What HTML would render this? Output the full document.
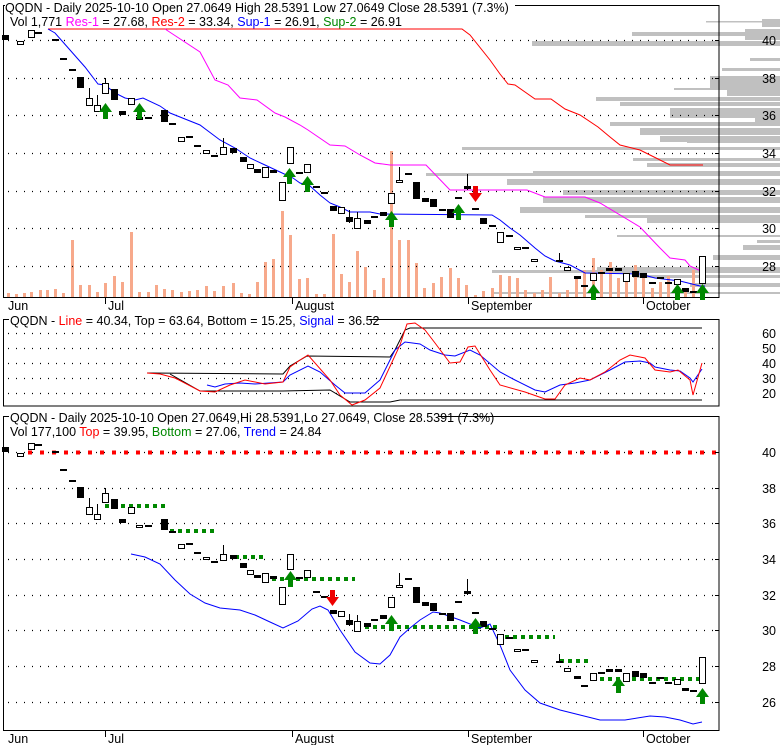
<!DOCTYPE html>
<html><head><meta charset="utf-8"><style>
html,body{margin:0;padding:0;background:#fff;width:780px;height:745px;overflow:hidden}
svg{display:block;font-family:"Liberation Sans",Arial,sans-serif}
</style></head><body>
<svg id="s" width="780" height="745" xmlns="http://www.w3.org/2000/svg">
<g id="vp" fill="#c0c0c0"></g>
<g id="vol" fill="#f7a98b"></g>
<g id="grid" stroke="#000" stroke-width="1.2" stroke-dasharray="1,7"></g>
<rect x="3.5" y="5.5" width="715.5" height="292" fill="none" stroke="#000"/>
<rect x="3.5" y="319.5" width="715.5" height="86.5" fill="none" stroke="#000"/>
<rect x="3.5" y="416.5" width="715.5" height="314" fill="none" stroke="#000"/>
<g id="lines" fill="none" stroke-width="1"></g>
<g id="c"></g>
<g id="t" font-size="12.5" fill="#000"></g>
</svg>
<script>
var NS="http://www.w3.org/2000/svg",S=document.getElementById('s');
function el(p,n,a,txt){var e=document.createElementNS(NS,n);for(var k in a)e.setAttribute(k,a[k]);if(txt!=null)e.textContent=txt;document.getElementById(p).appendChild(e);return e;}
[40,78,115,153,191,228,266].forEach(function(y){el('grid','line',{x1:8,x2:719,y1:y+.5,y2:y+.5});});
[333,348,363,378,393].forEach(function(y){el('grid','line',{x1:8,x2:719,y1:y+.5,y2:y+.5});});
[452,488,523,559,595,630,666,702].forEach(function(y){el('grid','line',{x1:8,x2:719,y1:y+.5,y2:y+.5});});
[[19,762,8],[21,706,1.5],[29,745,11],[32,632,4],[41,532,5],[58,750,3],[68,722,3],[76,710,14],[88,674,2],[90,727,6],[97,596,4],[102,620,4],[108,670,10],[118,755,6],[122,610,4],[128,640,7],[136,660,6],[140,687,3],[147,462,3],[158,633,3],[163,647,4],[171,533,5],[173,426,3],[179,507,6],[190,563,5],[197,543,6],[207,520,6],[215,585,3],[218,647,5],[235,617,2],[240,757,3],[245,743,5],[255,713,5],[267,597,3],[270,492,3],[275,633,3],[283,690,4],[292,492,2]].forEach(function(r){el('vp','rect',{x:r[1],y:r[0],width:780-r[1],height:r[2]});});
var V=[[8,293],[16,294],[24,293],[31,292],[40,290],[47,290],[55,289],[63,293],[72,240],[80,285],[89,285],[97,292],[105,283],[114,276],[122,282],[131,232],[139,292],[148,292],[156,285],[164,289],[172,290],[181,292],[189,291],[197,290],[206,286],[214,291],[223,286],[233,283],[241,293],[249,294],[257,282],[265,262],[273,259],[282,211],[290,235],[299,279],[307,278],[316,294],[324,294],[333,234],[341,274],[349,282],[357,251],[365,267],[374,290],[383,278],[391,151],[399,240],[408,240],[416,263],[424,288],[433,283],[441,277],[450,268],[458,278],[466,285],[475,295],[483,291],[492,288],[500,275],[509,276],[517,278],[525,290],[534,293],[542,290],[550,277],[559,293],[567,290],[576,277],[584,270],[593,258],[601,270],[610,262],[618,278],[626,275],[635,265],[643,278],[652,288],[660,282],[668,276],[677,292],[685,292],[693,270],[702,285]];
V.forEach(function(v){el('vol','rect',{x:v[0]-1,y:v[1],width:3,height:297-v[1]});});
function pl(pts,col,w,dash){el('lines','polyline',{points:pts.map(function(p){return p.join(',')}).join(' '),stroke:col,'stroke-width':w||1,'stroke-dasharray':dash||'none'});}
pl([[48,29],[462,29],[470,35],[490,60],[500,74],[508,84],[515,85],[535,99],[551,99],[565,109],[580,115],[598,127],[610,137],[620,145],[640,150],[650,155],[670,165],[703,165]],'#f00');
pl([[165,29],[200,52],[215,80],[228,85],[240,98],[257,100],[275,113],[285,117],[300,125],[308,130],[330,145],[345,146],[360,155],[375,163],[390,165],[426,165],[450,190],[527,190],[545,197],[585,197],[600,203],[640,227],[660,248],[670,258],[685,260],[690,266],[703,272]],'#f0f');
pl([[48,29],[55,33],[70,50],[85,67],[98,84],[105,85],[115,93],[125,98],[135,100],[143,98],[160,106],[170,113],[200,125],[220,140],[235,148],[250,158],[265,165],[280,172],[293,178],[300,183],[310,186],[320,195],[330,203],[340,207],[350,212],[370,212],[380,214],[492,215],[500,220],[510,228],[520,235],[535,248],[545,256],[555,261],[570,265],[585,273],[640,274],[655,278],[680,281],[700,286],[705,286]],'#00f');
pl([[147,373],[283,374],[290,366],[307,356],[390,357],[395,350],[405,330],[410,328],[702,328]],'#000');
pl([[170,374],[200,391],[283,391],[330,390],[350,402],[390,402],[400,400],[702,400]],'#000');
pl([[207,385],[215,387],[225,384],[240,383],[255,384],[283,382],[290,375],[308,366],[320,372],[335,385],[345,393],[365,393],[380,380],[395,350],[405,342],[420,344],[430,350],[445,355],[455,356],[470,350],[480,355],[500,372],[515,380],[535,390],[545,392],[560,385],[575,383],[590,380],[610,370],[625,362],[640,361],[650,363],[655,367],[670,370],[680,371],[690,378],[693,382],[702,369]],'#00f');
pl([[147,373],[160,374],[175,378],[200,391],[215,392],[230,385],[245,380],[265,384],[283,382],[290,367],[300,360],[308,355],[330,380],[340,395],[352,405],[365,400],[380,388],[400,345],[407,324],[415,323],[425,330],[435,343],[450,363],[460,362],[468,347],[475,346],[490,370],[500,385],[525,392],[545,399],[555,399],[565,385],[580,378],[590,380],[605,372],[620,360],[630,355],[645,358],[655,370],[670,372],[678,370],[690,380],[693,395],[702,363]],'#f00');
pl([[28,452.5],[719,452.5]],'#f00',4,'4,8');
[[105,165,506],[170,215,531],[235,265,557],[272,355,579],[365,500,627],[505,555,637],[560,590,661],[592,705,679]].forEach(function(g){pl([[g[0],g[2]],[g[1],g[2]]],'#080',4,'4,4');});
pl([[131,554],[145,557],[160,564],[175,580],[190,594],[205,603],[220,608],[240,610],[255,615],[270,622],[283,628],[298,621],[312,609],[320,606],[328,610],[340,630],[355,652],[370,663],[380,664],[390,655],[400,637],[410,628],[420,620],[433,612],[440,613],[460,620],[480,628],[490,624],[500,645],[510,670],[525,690],[540,703],[560,710],[580,715],[600,720],[625,720],[650,716],[665,717],[680,720],[693,724],[702,722]],'#00f');
var C=[[5,35,40,'f'],[20,41,44,'h'],[31,30,37,'h'],[38,33,33,'d'],[55,40,40,'d'],[63,59,59,'d'],[72,70,70,'d'],[80,77,88,'f'],[89,98,105,'h',88],[97,105,111,'h',95],[105,83,93,'h',78],[114,89,100,'f'],[122,111,115,'f'],[131,98,104,'h'],[139,117,119,'h'],[148,118,118,'d'],[164,110,122,'f'],[172,124,124,'d'],[181,137,141,'h'],[189,137,137,'d'],[197,146,146,'d'],[206,150,153,'h'],[214,156,156,'d'],[223,147,154,'h',138],[233,148,153,'f'],[243,157,162,'f'],[250,164,168,'h'],[257,169,173,'f'],[265,167,177,'h'],[273,170,173,'f'],[282,182,200,'h'],[290,147,163,'h'],[299,173,173,'d'],[307,164,172,'h'],[316,187,187,'d'],[324,193,193,'d'],[333,206,211,'f'],[341,207,213,'h'],[349,217,222,'f',210],[357,218,228,'h',212],[367,220,224,'f'],[374,217,217,'d'],[383,212,216,'f'],[391,193,203,'h'],[399,180,182,'h',167],[408,174,174,'d'],[416,182,199,'f'],[425,198,202,'f'],[433,199,207,'f'],[442,210,210,'d'],[450,209,218,'f'],[458,198,198,'d'],[467,186,189,'f',174],[475,209,209,'d'],[483,218,224,'f'],[492,226,226,'d'],[500,232,242,'h'],[509,236,236,'d'],[517,247,249,'h'],[525,248,248,'d'],[534,259,261,'h'],[559,261,261,'d',253],[567,267,270,'h'],[577,276,279,'f'],[584,286,286,'d'],[593,273,280,'h'],[601,273,273,'d'],[609,268,271,'f'],[618,268,271,'f'],[626,273,281,'h'],[635,271,277,'f'],[643,273,278,'f'],[652,283,283,'d'],[660,278,278,'d'],[668,283,283,'d'],[677,279,284,'h'],[685,288,292,'f'],[693,292,292,'d'],[702,256,283,'h']];
function candles(f){C.forEach(function(c){var x=c[0],t=f(c[1]),b=f(c[2]);
 if(c[4]!=null)el('c','line',{x1:x+.5,x2:x+.5,y1:f(c[4]),y2:b+1,stroke:'#000'});
 if(c[3]=='d')el('c','rect',{x:x-3,y:t-1,width:7,height:2,fill:'#000'});
 else if(c[3]=='f')el('c','rect',{x:x-3,y:t,width:7,height:Math.max(b-t,3),fill:'#000'});
 else el('c','rect',{x:x-2.5,y:t+.5,width:6,height:Math.max(b-t,2),fill:'#fff',stroke:'#000'});});}
candles(function(y){return y;});
candles(function(y){return Math.round(452+(y-40)*0.95);});
function arrow(x,y,col,down){var d=down?-1:1;el('c','path',{d:'M'+(x-2)+' '+(y+7*d)+'V'+(y)+'H'+(x-6)+'L'+(x+.5)+' '+(y-9*d)+'L'+(x+7)+' '+y+'H'+(x+3)+'V'+(y+7*d)+'Z',fill:col});}
[[105,112],[139,112],[289,177],[307,185],[391,220],[458,213],[593,293],[677,293],[702,293]].forEach(function(a){arrow(a[0],a[1],'#080');});
arrow(475,193,'#e00',true);
[[290,580],[391,624],[475,627],[618,686],[702,697]].forEach(function(a){arrow(a[0],a[1],'#080');});
arrow(332,597,'#e00',true);
function tx(x,y,parts,anchor){var t=el('t','text',{x:x,y:y,'text-anchor':anchor||'start'});parts.forEach(function(p){var s=document.createElementNS(NS,'tspan');if(p[1])s.setAttribute('fill',p[1]);s.textContent=p[0];t.appendChild(s);});t.setAttribute('xml:space','preserve');return t;}
function bg(x,y,w,h){el('t','rect',{x:x,y:y,width:w,height:h,fill:'#fff'});}
bg(5,0,510,13);
tx(5,12,[['QQDN - Daily 2025-10-10 Open 27.0649  High 28.5391  Low 27.0649  Close 28.5391 (7.3%)']]);
tx(10,26,[['Vol 1,771 '],['Res-1','#f0f'],[' = 27.68, '],['Res-2','#f00'],[' = 33.34, '],['Sup-1','#00f'],[' = 26.91, '],['Sup-2','#080'],[' = 26.91']]);
bg(9,313,360,13);
tx(10,325,[['QQDN - '],['Line','#f00'],[' = 40.34, Top = 63.64, Bottom = 15.25, '],['Signal','#00f'],[' = 36.52']]);
bg(9,410,430,13);
tx(10,422,[['QQDN - Daily 2025-10-10 Open 27.0649,Hi 28.5391,Lo 27.0649, Close 28.5391 (7.3%)']]);
tx(10,436,[['Vol 177,100 '],['Top','#f00'],[' = 39.95, '],['Bottom','#080'],[' = 27.06, '],['Trend','#00f'],[' = 24.84']]);
[[40,40],[78,38],[115,36],[153,34],[191,32],[228,30],[266,28]].forEach(function(a){tx(776,a[0]+5,[[String(a[1])]],'end');el('t','line',{x1:715,x2:719,y1:a[0]+.5,y2:a[0]+.5,stroke:'#000'});});
[[333,60],[348,50],[363,40],[378,30],[393,20]].forEach(function(a){tx(776,a[0]+5,[[String(a[1])]],'end');});
[[452,40],[488,38],[523,36],[559,34],[595,32],[630,30],[666,28],[702,26]].forEach(function(a){tx(776,a[0]+5,[[String(a[1])]],'end');el('t','line',{x1:715,x2:719,y1:a[0]+.5,y2:a[0]+.5,stroke:'#000'});});
[[8,'Jun',0],[108,'Jul',105],[295,'August',292],[471,'September',468],[646,'October',643]].forEach(function(m){tx(m[0],310,[[m[1]]]);tx(m[0],743,[[m[1]]]);if(m[2]){el('t','line',{x1:m[2]+.5,x2:m[2]+.5,y1:298,y2:304,stroke:'#000'});el('t','line',{x1:m[2]+.5,x2:m[2]+.5,y1:731,y2:737,stroke:'#000'});}});
</script>
</body></html>
